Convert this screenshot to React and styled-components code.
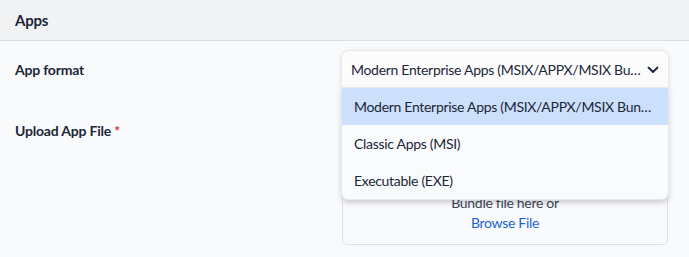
import React from "react";
import styled, { createGlobalStyle } from "styled-components";

const GlobalStyle = createGlobalStyle`
  body {
    margin: 0;
    background: #f9fafc;
    font-family: "Lato", "Noto Sans", sans-serif;
    color: #1b2638;
  }
`;

const options = [
  "Modern Enterprise Apps (MSIX/APPX/MSIX Bundle)",
  "Classic Apps (MSI)",
  "Executable (EXE)",
];

export default function App() {
  return (
    <>
      <GlobalStyle />
      <Page>
        <Header>Apps</Header>
        <Form>
          <Row>
            <Label>App format</Label>
            <SelectWrap>
              <SelectBox>
                <SelectValue>{options[0]}</SelectValue>
                <Chevron viewBox="0 0 12 8">
                  <path d="M1.5 1.5 L6 6 L10.5 1.5" fill="none" stroke="#1b2638" strokeWidth="1.8" strokeLinecap="round" strokeLinejoin="round" />
                </Chevron>
              </SelectBox>
              <Menu>
                {options.map((o, i) => (
                  <Option key={o} active={i === 0}>{o}</Option>
                ))}
              </Menu>
            </SelectWrap>
          </Row>
          <Row top>
            <Label pad>
              Upload App File <Required>*</Required>
            </Label>
            <DropZone>
              <DropText>Drag and drop your MSIX/APPX/MSIX</DropText>
              <DropText>Bundle file here or</DropText>
              <BrowseLink>Browse File</BrowseLink>
            </DropZone>
          </Row>
        </Form>
      </Page>
    </>
  );
}

const Page = styled.div`
  width: 689px;
`;

const Header = styled.div`
  height: 41px;
  box-sizing: border-box;
  display: flex;
  align-items: center;
  padding-left: 15px;
  background: #f1f2f4;
  border-bottom: 1px solid #dcdee2;
  font-size: 15px;
  font-weight: 700;
  letter-spacing: -0.2px;
`;

const Form = styled.div`
  display: flex;
  flex-direction: column;
  gap: 16px;
  padding: 10px 21px 0 15px;
`;

const Row = styled.div`
  display: flex;
  justify-content: space-between;
  align-items: ${(p) => (p.top ? "flex-start" : "center")};
`;

const Label = styled.div`
  font-size: 14px;
  font-weight: 700;
  letter-spacing: -0.2px;
  padding-top: ${(p) => (p.pad ? "18px" : "0")};
`;

const Required = styled.span`
  color: #c2412d;
`;

const SelectWrap = styled.div`
  position: relative;
  width: 326px;
  z-index: 2;
`;

const SelectBox = styled.div`
  height: 37px;
  box-sizing: border-box;
  display: flex;
  align-items: center;
  justify-content: space-between;
  padding: 0 9px 0 9px;
  background: #fcfcfd;
  border-radius: 6px 6px 0 0;
  box-shadow: 0 0 0 1px #e6e8eb, 0 2px 6px rgba(0, 0, 0, 0.12);
`;

const SelectValue = styled.span`
  font-size: 14px;
  letter-spacing: -0.3px;
  white-space: nowrap;
  overflow: hidden;
  text-overflow: ellipsis;
  max-width: 292px;
`;

const Chevron = styled.svg`
  width: 12px;
  height: 8px;
  flex: none;
`;

const Menu = styled.div`
  position: absolute;
  top: 100%;
  left: 0;
  right: 0;
  background: #fafbfc;
  border-radius: 0 0 6px 6px;
  overflow: hidden;
  box-shadow: 0 0 0 1px #e6e8eb, 0 3px 6px rgba(0, 0, 0, 0.22);
`;

const Option = styled.div`
  height: 37px;
  line-height: 37px;
  padding: 0 12px;
  font-size: 14px;
  letter-spacing: -0.3px;
  white-space: nowrap;
  overflow: hidden;
  text-overflow: ellipsis;
  background: ${(p) => (p.active ? "#cde0fb" : "transparent")};
`;

const DropZone = styled.div`
  width: 326px;
  height: 141px;
  box-sizing: border-box;
  border: 1px solid #dfe1e5;
  border-radius: 5px;
  display: flex;
  flex-direction: column;
  align-items: center;
  justify-content: flex-end;
  padding-bottom: 13px;
  gap: 3px;
`;

const DropText = styled.div`
  font-size: 14px;
  letter-spacing: -0.3px;
  color: #3d4656;
`;

const BrowseLink = styled.a`
  font-size: 14px;
  letter-spacing: -0.3px;
  color: #1a63d6;
  cursor: pointer;
`;
